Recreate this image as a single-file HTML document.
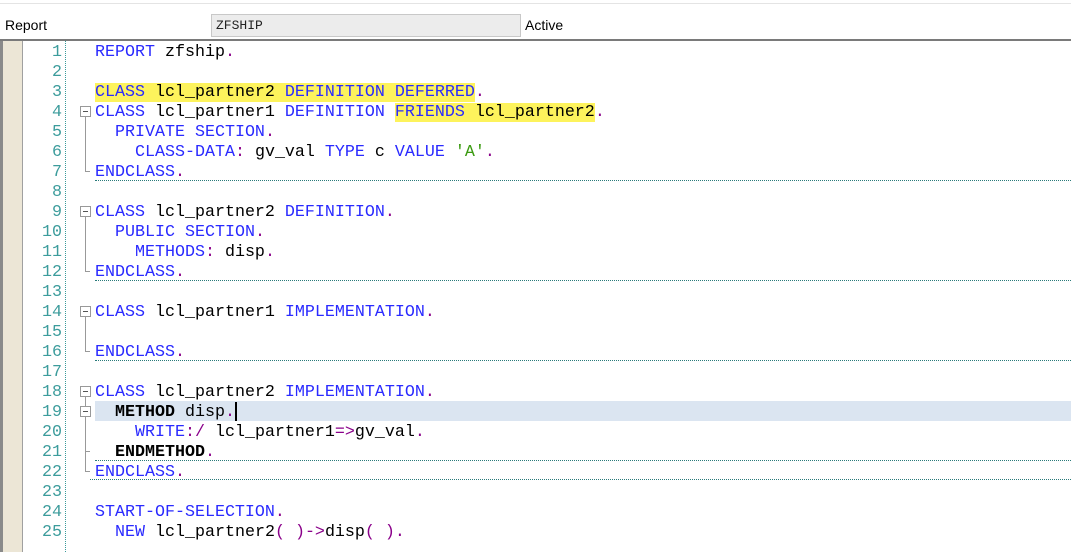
<!DOCTYPE html>
<html><head><meta charset="utf-8"><style>
*{margin:0;padding:0;box-sizing:border-box}
body{width:1071px;height:552px;background:#fff;position:relative;overflow:hidden;font-family:"Liberation Sans",sans-serif}
.topline{position:absolute;left:0;top:3px;width:1071px;height:1px;background:#e4e4e4}
.lbl{position:absolute;top:17px;font-size:14px;color:#000}
.inp{position:absolute;left:211px;top:14px;width:310px;height:23px;background:#ececec;border:1px solid #c8c8c8;font-family:"Liberation Mono",monospace;font-size:13px;padding:3px 4px;color:#222}
.bord{position:absolute;left:0;top:39px;width:1071px;height:2px;background:#7a7a7a}
.gut1{position:absolute;left:0;top:41px;width:3px;height:511px;background:#8a8a8a}
.gut2{position:absolute;left:3px;top:41px;width:19px;height:511px;background:#ece6d6}
.gut3{position:absolute;left:22px;top:41px;width:1px;height:511px;background:#a0a0a0}
.dotv{position:absolute;left:65px;top:41px;width:0;height:511px;border-left:1px dotted #3a9a9a}
.ln{position:absolute;left:23px;width:39px;text-align:right;font-family:"Liberation Mono",monospace;font-size:16.67px;color:#3c9c9c;line-height:20px;padding-top:2px}
.code{position:absolute;left:95px;font-family:"Liberation Mono",monospace;font-size:16.67px;line-height:20px;white-space:pre;color:#000;padding-top:2px}
.k{color:#2a2aff}.p{color:#8a008a}.s{color:#3a9a10}.b{font-weight:bold}
.hl{background:#fdf35c}
.cur{position:absolute;left:95px;top:401px;width:976px;height:20px;background:#dbe5f1}
.sep{position:absolute;height:0;border-top:1px dotted #2a7a7a;right:0}
.box{position:absolute;left:80px;width:11px;height:11px;border:1px solid #999;background:#fff}
.box:after{content:"";position:absolute;left:2px;top:4px;width:5px;height:1px;background:#555}
.vl{position:absolute;left:85px;width:1px;background:#999}
.tk{position:absolute;left:85px;width:5px;height:1px;background:#999}
.caret{position:absolute;left:235px;top:402px;width:2px;height:19px;background:#000}
</style></head><body>
<div class="topline"></div>
<div class="lbl" style="left:5px">Report</div>
<div class="inp">ZFSHIP</div>
<div class="lbl" style="left:525px">Active</div>
<div class="bord"></div>
<div class="gut1"></div><div class="gut2"></div><div class="gut3"></div><div class="dotv"></div>
<div class="cur"></div>
<div class="caret"></div>

<div class="ln" style="top:41px">1</div>
<div class="ln" style="top:61px">2</div>
<div class="ln" style="top:81px">3</div>
<div class="ln" style="top:101px">4</div>
<div class="ln" style="top:121px">5</div>
<div class="ln" style="top:141px">6</div>
<div class="ln" style="top:161px">7</div>
<div class="ln" style="top:181px">8</div>
<div class="ln" style="top:201px">9</div>
<div class="ln" style="top:221px">10</div>
<div class="ln" style="top:241px">11</div>
<div class="ln" style="top:261px">12</div>
<div class="ln" style="top:281px">13</div>
<div class="ln" style="top:301px">14</div>
<div class="ln" style="top:321px">15</div>
<div class="ln" style="top:341px">16</div>
<div class="ln" style="top:361px">17</div>
<div class="ln" style="top:381px">18</div>
<div class="ln" style="top:401px">19</div>
<div class="ln" style="top:421px">20</div>
<div class="ln" style="top:441px">21</div>
<div class="ln" style="top:461px">22</div>
<div class="ln" style="top:481px">23</div>
<div class="ln" style="top:501px">24</div>
<div class="ln" style="top:521px">25</div>

<div class="code" style="top:41px"><span class="k">REPORT</span> zfship<span class="p">.</span></div>
<div class="code" style="top:81px"><span class="hl"><span class="k">CLASS</span> lcl_partner2 <span class="k">DEFINITION DEFERRED</span></span><span class="p">.</span></div>
<div class="code" style="top:101px"><span class="k">CLASS</span> lcl_partner1 <span class="k">DEFINITION</span> <span class="hl"><span class="k">FRIENDS</span> lcl_partner2</span><span class="p">.</span></div>
<div class="code" style="top:121px">  <span class="k">PRIVATE SECTION</span><span class="p">.</span></div>
<div class="code" style="top:141px">    <span class="k">CLASS-DATA</span><span class="p">:</span> gv_val <span class="k">TYPE</span> c <span class="k">VALUE</span> <span class="s">'A'</span><span class="p">.</span></div>
<div class="code" style="top:161px"><span class="k">ENDCLASS</span><span class="p">.</span></div>
<div class="code" style="top:201px"><span class="k">CLASS</span> lcl_partner2 <span class="k">DEFINITION</span><span class="p">.</span></div>
<div class="code" style="top:221px">  <span class="k">PUBLIC SECTION</span><span class="p">.</span></div>
<div class="code" style="top:241px">    <span class="k">METHODS</span><span class="p">:</span> disp<span class="p">.</span></div>
<div class="code" style="top:261px"><span class="k">ENDCLASS</span><span class="p">.</span></div>
<div class="code" style="top:301px"><span class="k">CLASS</span> lcl_partner1 <span class="k">IMPLEMENTATION</span><span class="p">.</span></div>
<div class="code" style="top:341px"><span class="k">ENDCLASS</span><span class="p">.</span></div>
<div class="code" style="top:381px"><span class="k">CLASS</span> lcl_partner2 <span class="k">IMPLEMENTATION</span><span class="p">.</span></div>
<div class="code" style="top:401px">  <span class="b">METHOD</span> disp<span class="p">.</span></div>
<div class="code" style="top:421px">    <span class="k">WRITE</span><span class="p">:/</span> lcl_partner1<span class="p">=&gt;</span>gv_val<span class="p">.</span></div>
<div class="code" style="top:441px">  <span class="b">ENDMETHOD</span><span class="p">.</span></div>
<div class="code" style="top:461px"><span class="k">ENDCLASS</span><span class="p">.</span></div>
<div class="code" style="top:501px"><span class="k">START-OF-SELECTION</span><span class="p">.</span></div>
<div class="code" style="top:521px">  <span class="k">NEW</span> lcl_partner2<span class="p">( )-&gt;</span>disp<span class="p">( ).</span></div>

<div class="sep" style="left:95px;top:180px"></div>
<div class="sep" style="left:95px;top:280px"></div>
<div class="sep" style="left:95px;top:360px"></div>
<div class="sep" style="left:95px;top:460px"></div>
<div class="sep" style="left:90px;top:479px"></div>

<div class="box" style="top:106px"></div><div class="vl" style="top:117px;height:54px"></div><div class="tk" style="top:171px"></div>
<div class="box" style="top:206px"></div><div class="vl" style="top:217px;height:54px"></div><div class="tk" style="top:271px"></div>
<div class="box" style="top:306px"></div><div class="vl" style="top:317px;height:34px"></div><div class="tk" style="top:351px"></div>
<div class="box" style="top:386px"></div><div class="vl" style="top:397px;height:9px"></div>
<div class="box" style="top:406px"></div><div class="vl" style="top:417px;height:54px"></div><div class="tk" style="top:451px"></div><div class="tk" style="top:471px"></div>
</body></html>
